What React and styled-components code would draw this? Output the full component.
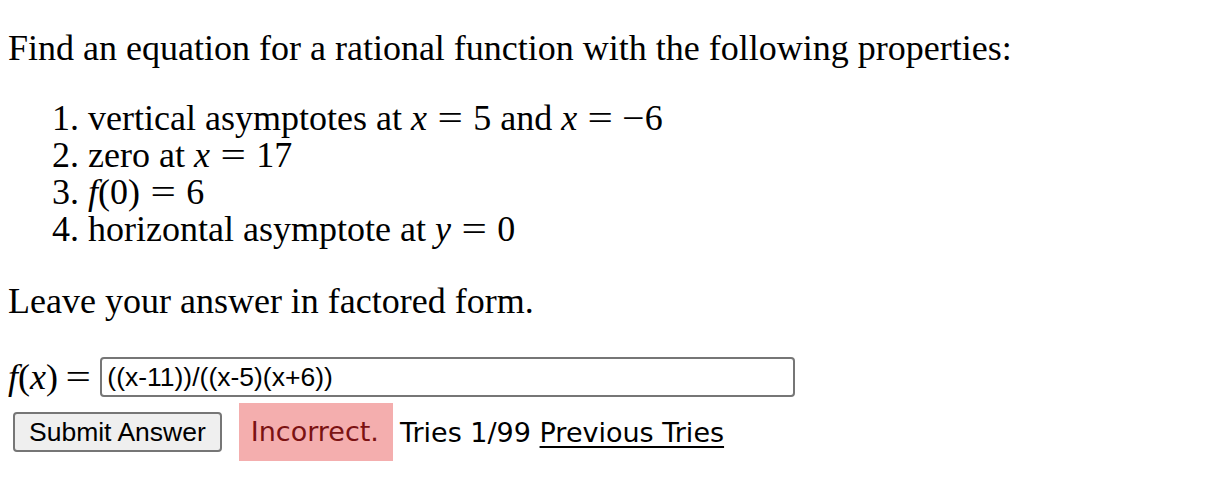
import React from 'react'
import styled, { createGlobalStyle } from 'styled-components'

const GlobalStyle = createGlobalStyle`
    body {
        margin: 8px;
        background: #fff;
        color: #000;
        font-family: 'Liberation Serif', 'Times New Roman', serif;
    }
`

const App = () => {
    return (
        <>
            <GlobalStyle />
            <Question>
                <Lead>Find an equation for a rational function with the following properties:</Lead>
                <Props>
                    <li>vertical asymptotes at <M><V>x</V><Eq>=</Eq>5</M> and <M><V>x</V><Eq>=</Eq><Minus>−</Minus>6</M></li>
                    <li>zero at <M><V>x</V><Eq>=</Eq>17</M></li>
                    <li><M><V>f</V>(0)<Eq>=</Eq>6</M></li>
                    <li>horizontal asymptote at <M><V>y</V><Eq>=</Eq>0</M></li>
                </Props>
                <Lead $gap={33}>Leave your answer in factored form.</Lead>
                <AnswerRow>
                    <M><V>f</V>(<V>x</V>)<Eq>=</Eq></M>
                    <AnswerInput defaultValue="((x-11))/((x-5)(x+6))" />
                </AnswerRow>
                <SubmitRow>
                    <SubmitButton>Submit Answer</SubmitButton>
                    <Feedback>
                        <Verdict>Incorrect.</Verdict>
                        <span>Tries 1/99 <TriesLink href="#">Previous Tries</TriesLink></span>
                    </Feedback>
                </SubmitRow>
            </Question>
        </>
    )
}

export default App

const Question = styled.div`
    font-size: 36px;
`
const Lead = styled.p`
    margin: ${p => p.$gap ?? 20}px 0 0;
    line-height: 40px;
`
const Props = styled.ol`
    margin: 32px 0 0;
    padding-left: 80px;
    line-height: 37px;
`
const M = styled.span`
    white-space: nowrap;
`
const V = styled.i`
    font-style: italic;
`
const Eq = styled.span`
    display: inline-block;
    margin: 0 13px;
    transform: scaleX(1.25);
`
const Minus = styled.span`
    display: inline-block;
    margin: 0 1px 0 0;
    transform: scaleX(1.1);
`
const AnswerRow = styled.div`
    display: flex;
    align-items: center;
    margin-top: 36px;
    height: 40px;
    ${Eq} {
        margin: 0 12px 0 10px;
    }
`
const AnswerInput = styled.input`
    width: 695px;
    height: 40px;
    box-sizing: border-box;
    border: 2px solid #767676;
    border-radius: 4px;
    padding: 0 5px;
    font-family: 'Liberation Sans', Arial, sans-serif;
    font-size: 26.5px;
    color: #000;
`
const SubmitRow = styled.div`
    display: flex;
    align-items: center;
    gap: 17px;
    margin-top: 6px;
    padding-left: 5px;
`
const SubmitButton = styled.button`
    height: 40px;
    padding: 0 14px;
    background: #efefef;
    border: 2px solid #767676;
    border-radius: 4px;
    font-family: 'Liberation Sans', Arial, sans-serif;
    font-size: 26.5px;
    color: #000;
`
const Feedback = styled.div`
    display: flex;
    align-items: center;
    gap: 7px;
    font-family: 'DejaVu Sans', Verdana, sans-serif;
    font-size: 27px;
`
const Verdict = styled.span`
    background: #f4aeae;
    color: #7b1212;
    padding: 13px 14px 14px 12px;
`
const TriesLink = styled.a`
    color: #000;
    text-decoration: underline;
    text-underline-offset: 4px;
`
